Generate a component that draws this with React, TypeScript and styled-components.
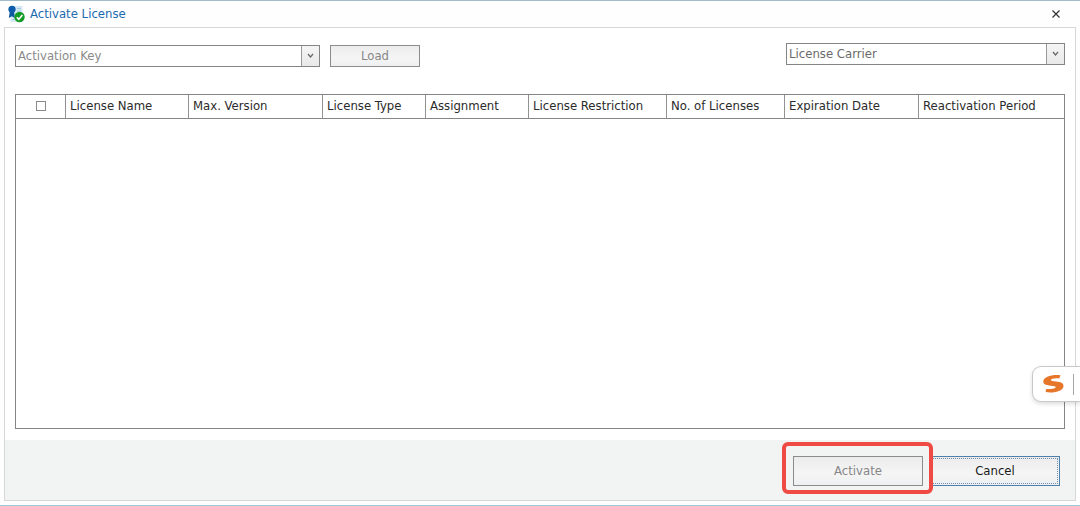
import React from "react";
import styled, { createGlobalStyle } from "styled-components";

const GlobalStyle = createGlobalStyle`
  *, *::before, *::after { box-sizing: border-box; }
  body {
    margin: 0;
    background: #fff;
    font-family: "DejaVu Sans Condensed", Tahoma, "DejaVu Sans", sans-serif;
    font-size: 13px;
    line-height: 16px;
    color: #2b2b2b;
  }
  button, select { font: inherit; }
`;

const Dialog = styled.main`
  display: flex;
  flex-direction: column;
  min-height: 100vh;
  padding: 0 4px 4px;
  border-top: 1px solid #a3bac7;
  border-bottom: 1px solid #9fc8dc;
  background: #fefefe;
  overflow-x: hidden;
`;

const TitleBar = styled.header`
  display: flex;
  align-items: center;
  height: 26px;
  padding: 0 12px 0 4px;
`;

const Title = styled.h1`
  flex: 1;
  margin: 0 0 0 5px;
  font-size: 13px;
  font-weight: 400;
  color: #1b6bb0;
`;

const CloseButton = styled.button`
  display: flex;
  align-items: center;
  justify-content: center;
  width: 16px;
  height: 16px;
  padding: 0;
  border: 0;
  background: none;
`;

const Panel = styled.div`
  flex: 1;
  display: flex;
  flex-direction: column;
  border: 1px solid #d5d7d9;
  background: #fff;
`;

const Content = styled.section`
  flex: 1;
  display: flex;
  flex-direction: column;
  padding: 15px 10px 11px;
`;

const Toolbar = styled.div`
  display: flex;
  align-items: flex-start;
  gap: 10px;
  margin-bottom: 27px;
`;

const KeyGroup = styled.div`
  flex: 1;
  display: flex;
  gap: 10px;
  padding-top: 2px;
`;

const Combo = styled.div<{ $width: number }>`
  display: grid;
  grid-template-columns: 1fr 18px;
  width: ${(p) => p.$width}px;
  height: 22px;
  border: 1px solid #858585;
  background: #fff;
`;

const ComboSelect = styled.select<{ $tone: string }>`
  appearance: none;
  grid-area: 1 / 1 / 2 / 3;
  width: 100%;
  padding: 0 20px 0 2px;
  border: 0;
  border-radius: 0;
  background: transparent;
  color: ${(p) => p.$tone};
  opacity: 1;
`;

const ComboArrow = styled.span`
  grid-area: 1 / 2;
  display: flex;
  align-items: center;
  justify-content: center;
  border-left: 1px solid #9a9a9a;
  background: linear-gradient(#f5f5f5, #e9e9e9);
  pointer-events: none;
`;

const PushButton = styled.button`
  height: 30px;
  width: 130px;
  padding: 0;
  border: 1px solid #8c8c8c;
  background: linear-gradient(#ececed, #f5f5f6 60%, #eeeff0);
  color: #1a1a1a;

  &:disabled { color: #868686; }
`;

const LoadButton = styled(PushButton)`
  width: 90px;
  height: 22px;
`;

const CancelButton = styled(PushButton)`
  border-color: #4f81ad;
  outline: 1px dotted #6f8fae;
  outline-offset: -3px;
`;

const TableFrame = styled.div`
  flex: 1;
  border: 1px solid #858585;
  background: #fff;
`;

const Table = styled.table`
  width: 100%;
  table-layout: fixed;
  border-collapse: separate;
  border-spacing: 0;
`;

const HeadCell = styled.th<{ $width?: number }>`
  width: ${(p) => (p.$width ? `${p.$width}px` : "auto")};
  height: 24px;
  padding: 0 0 1px 4px;
  border-bottom: 1px solid #858585;
  border-right: 1px solid #929292;
  text-align: left;
  font-weight: 400;
  white-space: nowrap;

  &:last-child { border-right: 0; }
`;

const CheckCell = styled(HeadCell)`
  padding: 0 0 2px;
`;

const CheckBox = styled.input`
  appearance: none;
  display: block;
  width: 10px;
  height: 10px;
  margin: 0 auto;
  border: 1px solid #8a8a8a;
  background: #fff;
`;

const Footer = styled.footer`
  display: flex;
  justify-content: flex-end;
  gap: 7px;
  padding: 16px 15px 14px;
  background: #f2f3f3;
`;

const Highlight = styled.div`
  position: relative;
  display: flex;

  &::after {
    content: "";
    position: absolute;
    inset: -14px -10px -8px -11px;
    border: 4px solid #ef4a43;
    border-radius: 6px;
    pointer-events: none;
  }
`;

const InputBadge = styled.aside`
  position: fixed;
  right: 0;
  bottom: 104px;
  display: flex;
  align-items: center;
  justify-content: space-between;
  width: 48px;
  height: 36px;
  padding: 0 6px 0 9px;
  border: 1px solid #c9c9c9;
  border-right: 0;
  border-radius: 9px 0 0 9px;
  background: #fff;
  box-shadow: 0 2px 4px rgba(0, 0, 0, 0.14);
`;

const BadgeDivider = styled.span`
  width: 1px;
  height: 21px;
  background: #a5a5a5;
`;

const columns = [
  { label: "License Name", width: 123 },
  { label: "Max. Version", width: 134 },
  { label: "License Type", width: 103 },
  { label: "Assignment", width: 103 },
  { label: "License Restriction", width: 138 },
  { label: "No. of Licenses", width: 118 },
  { label: "Expiration Date", width: 134 },
  { label: "Reactivation Period" },
];

const LicenseIcon = () => (
  <svg width="17" height="18" viewBox="0 0 17 18" aria-hidden="true">
    <path d="M2.500 1h12v16h-12z" fill="#d6e9f5" />
    <path d="M9 3.500h4M9 6h4M4 14.500h3" stroke="#a3cbe4" />
    <path d="M1.800 6.500L.8 13l3-1.800L6.800 13l-.8-6.500z" fill="#0b57a0" />
    <circle cx="4" cy="4.300" r="3.600" fill="#0d5cab" />
    <circle cx="11.500" cy="12" r="5.200" fill="#149b26" />
    <path d="M8.800 12.200l2 2 3.600-4.200" fill="none" stroke="#fff" strokeWidth="1.600" />
  </svg>
);

const Chevron = () => (
  <svg width="7" height="6" viewBox="0 0 7 6" aria-hidden="true">
    <path d="M1 1l2.500 3L6 1" fill="none" stroke="#666" strokeWidth="1.200" />
  </svg>
);

const BadgeLogo = () => (
  <svg width="22" height="20" viewBox="0 0 22 20" aria-hidden="true">
    <path
      d="M18.500 1.200C10 .2 1.300 2.800 1.300 7.400c0 3 3.200 3.900 7.200 4.300 3.200.3 5.200.4 5.200 1.400 0 1.600-4.600 2.400-9.500 1.800l-.6 3.200c8.600 1.300 17.900-1.100 17.900-6.200 0-3-2.900-4-7.300-4.400-3.200-.3-5.300-.4-5.300-1.400 0-1.500 4.300-2.200 8.300-1.700z"
      fill="#e6762a"
    />
  </svg>
);

interface DropDownProps {
  label: string;
  width: number;
  tone: string;
  disabled?: boolean;
}

const DropDown = ({ label, width, tone, disabled }: DropDownProps) => (
  <Combo $width={width}>
    <ComboSelect $tone={tone} aria-label={label} disabled={disabled}>
      <option>{label}</option>
    </ComboSelect>
    <ComboArrow>
      <Chevron />
    </ComboArrow>
  </Combo>
);

export default function App() {
  return (
    <>
      <GlobalStyle />
      <Dialog>
        <TitleBar>
          <LicenseIcon />
          <Title>Activate License</Title>
          <CloseButton aria-label="Close">
            <svg width="8" height="8" viewBox="0 0 8 8" aria-hidden="true">
              <path d="M.5.5l7 7m0-7l-7 7" stroke="#333" strokeWidth="1.200" />
            </svg>
          </CloseButton>
        </TitleBar>
        <Panel>
          <Content>
            <Toolbar>
              <KeyGroup>
                <DropDown label="Activation Key" width={305} tone="#8a8a8a" disabled />
                <LoadButton disabled>Load</LoadButton>
              </KeyGroup>
              <DropDown label="License Carrier" width={279} tone="#6a6a6a" />
            </Toolbar>
            <TableFrame>
              <Table>
                <thead>
                  <tr>
                    <CheckCell $width={50}>
                      <CheckBox type="checkbox" aria-label="Select all licenses" />
                    </CheckCell>
                    {columns.map((c) => (
                      <HeadCell key={c.label} scope="col" $width={c.width}>
                        {c.label}
                      </HeadCell>
                    ))}
                  </tr>
                </thead>
              </Table>
            </TableFrame>
          </Content>
          <Footer>
            <Highlight>
              <PushButton disabled>Activate</PushButton>
            </Highlight>
            <CancelButton>Cancel</CancelButton>
          </Footer>
        </Panel>
      </Dialog>
      <InputBadge>
        <BadgeLogo />
        <BadgeDivider />
      </InputBadge>
    </>
  );
}
